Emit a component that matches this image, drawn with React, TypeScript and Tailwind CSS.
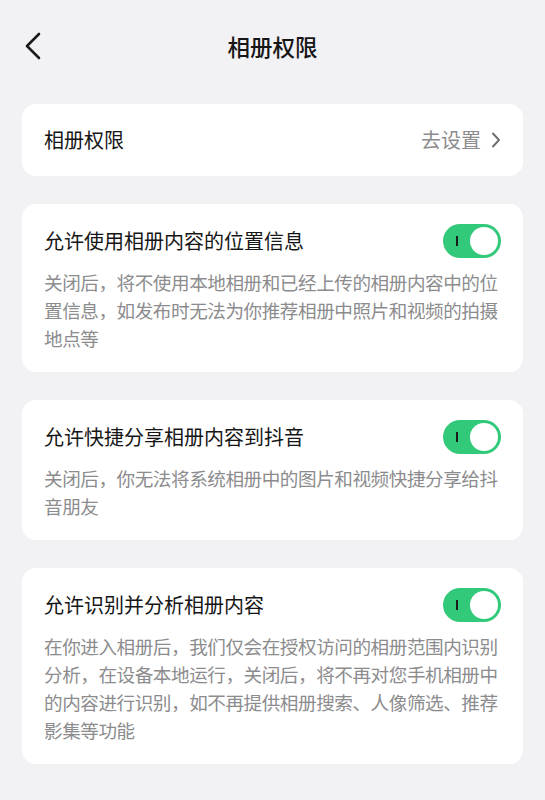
import React from "react";

const font = {
  fontFamily: '"Noto Sans CJK SC", "Noto Sans", sans-serif',
};

function Toggle() {
  return (
    <div className="relative w-[58px] h-[34px] rounded-full bg-[#33c97b] shrink-0">
      <div className="absolute left-[13px] top-[12px] w-[1.5px] h-[10px] bg-[#1b1b1b]" />
      <div className="absolute right-[3px] top-[3px] w-[28px] h-[28px] rounded-full bg-white" />
    </div>
  );
}

function ToggleCard({ title, desc }: { title: string; desc: string }) {
  return (
    <div className="bg-white rounded-[14px] px-[22px] pt-[20px] pb-[20px]">
      <div className="flex items-center justify-between h-[34px]">
        <span className="text-[20px] text-[#161616] leading-[34px]">{title}</span>
        <Toggle />
      </div>
      <p className="mt-[10px] text-[18.6px] tracking-[-0.45px] leading-[28px] text-[#8c8c8e]">{desc}</p>
    </div>
  );
}

export default function App() {
  return (
    <div className="w-[545px] h-[800px] bg-[#f2f2f4] overflow-hidden" style={font}>
      <div className="relative h-[92px] flex items-center justify-center">
        <svg
          className="absolute left-[22px] top-[31px]"
          width="22"
          height="30"
          viewBox="0 0 22 30"
          fill="none"
        >
          <path d="M17 3 L5 15 L17 27" stroke="#1b1b1b" strokeWidth="2.6" strokeLinecap="round" strokeLinejoin="round" />
        </svg>
        <span className="text-[22.5px] font-medium text-[#161616] leading-none">相册权限</span>
      </div>
      <div className="px-[22px] pt-[12px] flex flex-col gap-[28px]">
        <div className="bg-white rounded-[14px] h-[72px] px-[22px] flex items-center justify-between">
          <span className="text-[20px] text-[#161616]">相册权限</span>
          <span className="flex items-center gap-[10px] text-[20px] text-[#8c8c8e]">
            去设置
            <svg width="10" height="16" viewBox="0 0 10 16" fill="none">
              <path d="M2 1.5 L8 8 L2 14.5" stroke="#6e6e70" strokeWidth="1.9" strokeLinecap="round" strokeLinejoin="round" />
            </svg>
          </span>
        </div>
        <ToggleCard
          title="允许使用相册内容的位置信息"
          desc="关闭后，将不使用本地相册和已经上传的相册内容中的位置信息，如发布时无法为你推荐相册中照片和视频的拍摄地点等"
        />
        <ToggleCard
          title="允许快捷分享相册内容到抖音"
          desc="关闭后，你无法将系统相册中的图片和视频快捷分享给抖音朋友"
        />
        <ToggleCard
          title="允许识别并分析相册内容"
          desc="在你进入相册后，我们仅会在授权访问的相册范围内识别分析，在设备本地运行，关闭后，将不再对您手机相册中的内容进行识别，如不再提供相册搜索、人像筛选、推荐影集等功能"
        />
      </div>
    </div>
  );
}
